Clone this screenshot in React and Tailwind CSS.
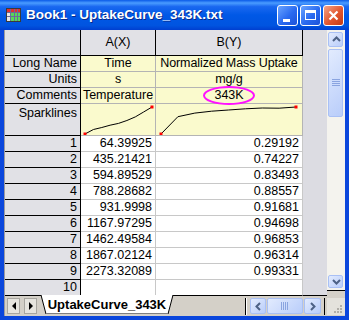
import React from 'react';

const rows = [
  ['1', '64.39925', '0.29192'],
  ['2', '435.21421', '0.74227'],
  ['3', '594.89529', '0.83493'],
  ['4', '788.28682', '0.88557'],
  ['5', '931.9998', '0.91681'],
  ['6', '1167.97295', '0.94698'],
  ['7', '1462.49584', '0.96853'],
  ['8', '1867.02124', '0.96314'],
  ['9', '2273.32089', '0.99331'],
  ['10', '', ''],
];

// sparkline points, already scaled to the cell
const sparkA = [[4, 30], [12.4, 25.5], [20.8, 23.5], [29.1, 21.2], [37.5, 19.4], [45.9, 16.5], [54.3, 12.9], [62.6, 8], [71, 3]];
const sparkB = [[5, 30], [21.9, 12.7], [38.8, 9.1], [55.6, 7.2], [72.5, 6], [89.4, 4.8], [106.3, 4], [123.1, 4.2], [140, 3]];

const Spark = ({ pts, w }) => (
  <svg width={w} height="31" className="block">
    <polyline points={pts.map(p => p.join(',')).join(' ')} fill="none" stroke="#000" strokeWidth="1" />
    <rect x={pts[0][0] - 1.5} y={pts[0][1] - 1.5} width="3" height="3" fill="#ff0000" />
    <rect x={pts[pts.length - 1][0] - 1.5} y={pts[pts.length - 1][1] - 1.5} width="3" height="3" fill="#ff0000" />
  </svg>
);

const XpArrow = ({ dir }) => {
  const pts = {
    up: '4,9 7.5,5.5 11,9',
    down: '4,6 7.5,9.5 11,6',
    left: '9,4 5.5,7.5 9,11',
    right: '6,4 9.5,7.5 6,11',
  }[dir];
  return (
    <svg width="15" height="15" className="block">
      <polyline points={pts} fill="none" stroke="#4d6185" strokeWidth="2" />
    </svg>
  );
};

const XpBtn = ({ children, className = '' }) => (
  <div className={`rounded-[2px] border border-[#a9c0f5] bg-[linear-gradient(135deg,#e2ebfe,#b9cdfa)] flex items-center justify-center ${className}`}>
    {children}
  </div>
);

const LabelRow = ({ label, a, b, children }) => (
  <div className="flex h-[16px]">
    <div className="w-[76px] shrink-0 bg-[#e1e1e6] border-r border-b border-black text-right pr-[3px] leading-[15px]">{label}</div>
    <div className="w-[75px] shrink-0 bg-[#fafacd] border-r border-b border-[#b4b4b4] text-center leading-[15px] whitespace-nowrap overflow-hidden">{a}</div>
    <div className="relative w-[147px] shrink-0 bg-[#fafacd] border-r border-b border-[#b4b4b4] text-center leading-[15px] whitespace-nowrap tracking-[-0.1px]">
      {b}
      {children}
    </div>
    <div className="flex-1 bg-[#dcdce2]" />
  </div>
);

export default function App() {
  return (
    <div className="w-[349px] h-[320px] flex flex-col bg-[#0a46dc] font-['Liberation_Sans',Arial,sans-serif] text-[12.5px] text-black select-none">
      {/* title bar */}
      <div className="h-[30px] shrink-0 flex items-center pl-[6px] pr-[5px] bg-[linear-gradient(to_bottom,#0a5ae8_0%,#4a9cff_10%,#1a68f0_22%,#0058e6_50%,#0054e0_85%,#003fd0_100%)]">
        <svg width="15" height="14" className="shrink-0">
          <rect x="0.5" y="0.5" width="14" height="13" fill="#ffffff" stroke="#3a3a3a" />
          <rect x="1" y="1" width="13" height="3" fill="#e03030" />
          <rect x="1" y="5" width="3" height="8" fill="#e8e8e8" />
          <rect x="5" y="5" width="9" height="8" fill="#58d858" />
          <path d="M1 4.5H14M1 8.5H14M4.5 1V13M8.5 1V13M11.5 1V13" stroke="#6a6a9a" strokeWidth="1" />
        </svg>
        <div className="ml-[5px] text-white font-bold text-[13.5px] [text-shadow:1px_1px_0_#0a2a8a]">Book1 - UptakeCurve_343K.txt</div>
        <div className="flex-1" />
        <div className="flex gap-[2px]">
          <div className="w-[21px] h-[21px] rounded-[3px] border border-white bg-[linear-gradient(135deg,#6aa4ff,#2a6af0_55%,#1c52d8)] relative">
            <div className="absolute left-[5px] top-[13px] w-[7px] h-[3px] bg-white" />
          </div>
          <div className="w-[21px] h-[21px] rounded-[3px] border border-white bg-[linear-gradient(135deg,#6aa4ff,#2a6af0_55%,#1c52d8)] flex items-center justify-center">
            <div className="w-[11px] h-[10px] border border-white border-t-[3px]" />
          </div>
          <div className="w-[21px] h-[21px] rounded-[3px] border border-white bg-[linear-gradient(135deg,#f4a488,#e2562e_55%,#c43a12)] flex items-center justify-center">
            <svg width="11" height="11"><path d="M1.5 1.5L9.5 9.5M9.5 1.5L1.5 9.5" stroke="#fff" strokeWidth="2.2" /></svg>
          </div>
        </div>
      </div>

      {/* client */}
      <div className="flex-1 flex flex-col ml-[4px] mr-[4px] mb-[4px] bg-[#d4d0c8] border-l border-[#9a9aa0]">
        <div className="flex h-[266px]">
          {/* sheet */}
          <div className="flex-1 flex flex-col">
            {/* column header */}
            <div className="flex h-[26px]">
              <div className="w-[76px] shrink-0 bg-[#e1e1e6] border-r border-b border-black" />
              <div className="w-[75px] shrink-0 bg-[#e1e1e6] border-r border-b border-black flex items-center justify-center">A(X)</div>
              <div className="w-[147px] shrink-0 bg-[#e1e1e6] border-r border-b border-black flex items-center justify-center">B(Y)</div>
              <div className="flex-1 bg-[#dcdce2]" />
            </div>
            <LabelRow label="Long Name" a="Time" b="Normalized Mass Uptake" />
            <LabelRow label="Units" a="s" b="mg/g" />
            <LabelRow label="Comments" a="Temperature" b="343K">
              <div className="absolute left-[47px] top-[-2px] w-[52px] h-[19px] rounded-[50%] border-2 border-[#ff10ff]" />
            </LabelRow>
            {/* sparklines */}
            <div className="flex h-[32px]">
              <div className="w-[76px] shrink-0 bg-[#e1e1e6] border-r border-b border-black text-right pr-[3px] leading-[15px] pt-[2px]">Sparklines</div>
              <div className="w-[75px] shrink-0 bg-[#fafacd] border-r border-b border-[#b4b4b4]">
                <Spark pts={sparkA} w={74} />
              </div>
              <div className="w-[147px] shrink-0 bg-[#fafacd] border-r border-b border-[#b4b4b4]">
                <Spark pts={sparkB} w={146} />
              </div>
              <div className="flex-1 bg-[#dcdce2]" />
            </div>
            {/* data */}
            {rows.map(([n, a, b], i) => {
              const last = i === rows.length - 1;
              return (
                <div key={n} className="flex h-[16px]">
                  <div className="w-[76px] shrink-0 bg-[#e1e1e6] border-r border-b border-black text-right pr-[3px] leading-[15px]">{n}</div>
                  <div className={`w-[75px] shrink-0 bg-white border-r border-b text-right pr-[3px] leading-[15px] ${last ? 'border-b-black border-r-[#c8c8c8]' : 'border-[#c8c8c8]'}`}>{a}</div>
                  <div className={`w-[147px] shrink-0 bg-white border-r border-b text-right pr-[3px] leading-[15px] ${last ? 'border-b-black border-r-[#c8c8c8]' : 'border-[#c8c8c8]'}`}>{b}</div>
                  <div className={`flex-1 bg-[#dcdce2] ${last ? 'border-b border-black' : ''}`} />
                </div>
              );
            })}
          </div>
          {/* vertical scrollbar */}
          <div className="w-[18px] shrink-0 flex flex-col bg-[#f4f3ee] pt-[2px] pl-[1px] pr-[2px]">
            <XpBtn className="h-[15px]"><XpArrow dir="up" /></XpBtn>
            <XpBtn className="h-[68px] mt-[2px]">
              <svg width="8" height="8" className="block">
                <path d="M0 0.5H8M0 2.5H8M0 4.5H8M0 6.5H8" stroke="#8aa4e0" strokeWidth="1" />
              </svg>
            </XpBtn>
            <div className="flex-1" />
            <XpBtn className="h-[13px]"><XpArrow dir="down" /></XpBtn>
            <div className="h-[6px] border-t border-black -ml-[1px] -mr-[2px] mt-[2px] bg-[#d4d0c8]" />
          </div>
        </div>

        {/* sheet tabs + horizontal scrollbar */}
        <div className="flex-1 flex items-center bg-[#d4d0c8]">
          <div className="ml-[2px] w-[13px] h-[16px] bg-[#e6e4de] border border-[#a8a6a0] flex items-center justify-center">
            <svg width="6" height="8"><path d="M5 0L1 4L5 8Z" fill="#000" /></svg>
          </div>
          <div className="ml-[4px] w-[13px] h-[16px] bg-[#e6e4de] border border-[#a8a6a0] flex items-center justify-center">
            <svg width="6" height="8"><path d="M1 0L5 4L1 8Z" fill="#000" /></svg>
          </div>
          <div className="relative ml-[3px] w-[134px] h-[19px] -mt-[1px] self-start flex items-center justify-center font-bold text-[13px]">
            <svg width="134" height="19" className="absolute inset-0">
              <polygon points="1,0 133,0 128,19 6,19" fill="#fff" />
              <path d="M1 0L6 19M128 19L133 0" stroke="#000" strokeWidth="1" />
              <path d="M6 18.5H128" stroke="#808080" strokeWidth="1" />
            </svg>
            <span className="relative">UptakeCurve_343K</span>
          </div>
          <div className="flex-1" />
          <div className="w-[1px] h-[17px] bg-black" />
          <div className="w-[1px] h-[17px] bg-white mr-[3px]" />
          <div className="flex gap-[1px]">
            <XpBtn className="w-[16px] h-[16px]"><XpArrow dir="left" /></XpBtn>
            <XpBtn className="w-[36px] h-[16px]">
              <svg width="8" height="8" className="block">
                <path d="M0.5 0V8M2.5 0V8M4.5 0V8M6.5 0V8" stroke="#8aa4e0" strokeWidth="1" />
              </svg>
            </XpBtn>
            <XpBtn className="w-[17px] h-[16px]"><XpArrow dir="right" /></XpBtn>
          </div>
          <div className="ml-[3px] w-[1px] h-[17px] bg-black" />
          <div className="w-[18px] h-[17px] ml-[2px] bg-[#e4e2dc] relative">
            <svg width="18" height="17" className="absolute inset-0">
              <g fill="#b0aea8">
                <rect x="13" y="13" width="2" height="2" />
                <rect x="10" y="13" width="2" height="2" />
                <rect x="7" y="13" width="2" height="2" />
                <rect x="13" y="10" width="2" height="2" />
                <rect x="10" y="10" width="2" height="2" />
                <rect x="13" y="7" width="2" height="2" />
              </g>
            </svg>
          </div>
        </div>
      </div>
    </div>
  );
}
